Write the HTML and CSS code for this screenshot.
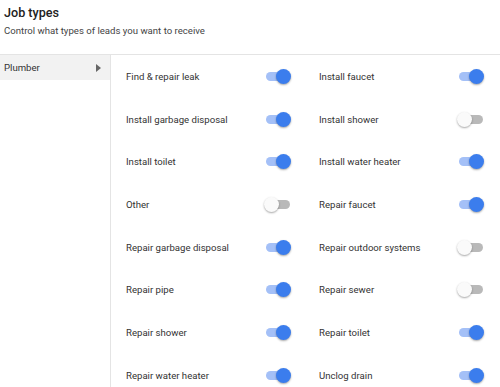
FILE: index.html
```html
<!DOCTYPE html>
<html>
<head>
<meta charset="utf-8">
<link rel="stylesheet" href="styles.css">
</head>
<body>
<header class="head">
  <h1 class="title">Job types</h1>
  <p class="sub">Control what types of leads you want to receive</p>
</header>
<div class="main">
  <aside class="side">
    <div class="cat active"><span>Plumber</span><span class="arrow"></span></div>
  </aside>
  <section class="grid">
    <div class="item"><span>Find &amp; repair leak</span><span class="sw on"></span></div>
    <div class="item"><span>Install faucet</span><span class="sw on"></span></div>
    <div class="item"><span>Install garbage disposal</span><span class="sw on"></span></div>
    <div class="item"><span>Install shower</span><span class="sw"></span></div>
    <div class="item"><span>Install toilet</span><span class="sw on"></span></div>
    <div class="item"><span>Install water heater</span><span class="sw on"></span></div>
    <div class="item"><span>Other</span><span class="sw"></span></div>
    <div class="item"><span>Repair faucet</span><span class="sw on"></span></div>
    <div class="item"><span>Repair garbage disposal</span><span class="sw on"></span></div>
    <div class="item"><span>Repair outdoor systems</span><span class="sw"></span></div>
    <div class="item"><span>Repair pipe</span><span class="sw on"></span></div>
    <div class="item"><span>Repair sewer</span><span class="sw"></span></div>
    <div class="item"><span>Repair shower</span><span class="sw on"></span></div>
    <div class="item"><span>Repair toilet</span><span class="sw on"></span></div>
    <div class="item"><span>Repair water heater</span><span class="sw on"></span></div>
    <div class="item"><span>Unclog drain</span><span class="sw on"></span></div>
  </section>
</div>
</body>
</html>
```
FILE: styles.css
```css
* { box-sizing: border-box; }
html, body { margin: 0; padding: 0; background: #fff; }
body {
  font-family: Roboto, "Liberation Sans", sans-serif;
  color: #333;
  width: 500px;
  height: 387px;
  overflow: hidden;
}
.head {
  padding: 4px 4px 0 4px;
  height: 55px;
  border-bottom: 1px solid #e4e4e4;
}
.title {
  margin: 0;
  font-size: 12.6px;
  font-weight: 500;
  color: #222;
  line-height: 17px;
}
.sub {
  margin: 3px 0 0 0;
  font-size: 9.6px;
  color: #444;
  line-height: 14px;
}
.main {
  display: flex;
}
.side {
  width: 111px;
  border-right: 1px solid #e4e4e4;
  height: 340px;
  flex-shrink: 0;
}
.cat {
  display: flex;
  align-items: center;
  justify-content: space-between;
  height: 25px;
  padding: 0 9px 0 4px;
  font-size: 9.6px;
  color: #333;
}
.cat.active { background: #f2f2f2; }
.arrow {
  width: 0; height: 0;
  border-top: 4.5px solid transparent;
  border-bottom: 4.5px solid transparent;
  border-left: 5px solid #666;
}
.grid {
  display: grid;
  grid-template-columns: 193px 193px;
  grid-auto-rows: 42.7px;
  padding: 0 0 0 15px;
}
.item {
  display: flex;
  align-items: center;
  justify-content: space-between;
  padding-right: 29px;
  font-size: 9.6px;
  color: #333;
}
.sw {
  position: relative;
  width: 24px;
  height: 9px;
  border-radius: 5px;
  background: #b9b9b9;
}
.sw::after {
  content: "";
  position: absolute;
  top: -3px;
  left: -2px;
  width: 15px;
  height: 15px;
  border-radius: 50%;
  background: #fafafa;
  box-shadow: 0 1px 2px rgba(0,0,0,0.35);
}
.sw.on { background: #a4c0f7; }
.sw.on::after {
  left: 10px;
  background: #3b7ded;
}
```
